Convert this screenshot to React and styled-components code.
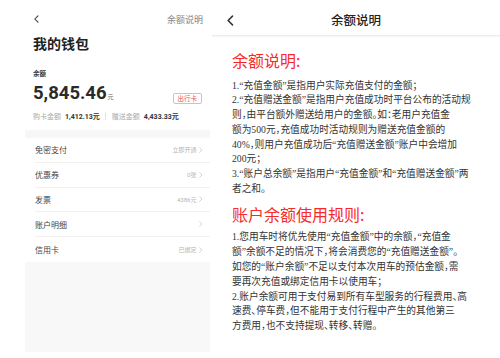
import React from "react";
import styled, { createGlobalStyle } from "styled-components";

const GlobalStyle = createGlobalStyle`
  html, body {
    margin: 0;
    padding: 0;
    background: #ffffff;
  }
  body {
    font-family: "Roboto", "Noto Sans CJK SC", sans-serif;
  }
`;

const menuItems = [
  { label: "免密支付", value: "立即开通" },
  { label: "优惠券", value: "0张" },
  { label: "发票", value: "4386元" },
  { label: "账户明细", value: "" },
  { label: "信用卡", value: "已绑定" },
];

const rulesA = [
  "1.“充值金额”是指用户实际充值支付的金额；",
  "2.“充值赠送金额”是指用户充值成功时平台公布的活动规",
  "则，由平台额外赠送给用户的金额。如：老用户充值金",
  "额为500元，充值成功时活动规则为赠送充值金额的",
  "40%，则用户充值成功后“充值赠送金额”账户中会增加",
  "200元；",
  "3.“账户总余额”是指用户“充值金额”和“充值赠送金额”两",
  "者之和。",
];

const rulesB = [
  "1.您用车时将优先使用“充值金额”中的余额，“充值金",
  "额”余额不足的情况下，将会消费您的“充值赠送金额”。",
  "如您的“账户余额”不足以支付本次用车的预估金额，需",
  "要再次充值或绑定信用卡以使用车；",
  "2.账户余额可用于支付易到所有车型服务的行程费用、高",
  "速费、停车费，但不能用于支付行程中产生的其他第三",
  "方费用，也不支持提现、转移、转赠。",
];

const Chevron = ({ size = 9, color = "#333", left = true, weight = 1.3 }) => (
  <svg width={size * 0.6} height={size} viewBox="0 0 6 10" fill="none">
    <polyline
      points={left ? "5,1 1,5 5,9" : "1,1 5,5 1,9"}
      stroke={color}
      strokeWidth={weight}
      strokeLinecap="round"
      strokeLinejoin="round"
    />
  </svg>
);

export default function App() {
  return (
    <>
      <GlobalStyle />
      <Page>
        <Wallet>
          <WalletNav>
            <Chevron size={8} color="#333" />
            <NavLink>余额说明</NavLink>
          </WalletNav>
          <WalletTitle>我的钱包</WalletTitle>
          <BalanceLabel>余额</BalanceLabel>
          <AmountRow>
            <Amount>
              5,845.46<Unit>元</Unit>
            </Amount>
            <Badge>出行卡</Badge>
          </AmountRow>
          <SubLine>
            <SubKey>购卡金额</SubKey>
            <SubValue>1,412.13元</SubValue>
            <SubDivider />
            <SubKey>赠送金额</SubKey>
            <SubValue>4,433.33元</SubValue>
          </SubLine>
          <Band />
          <Menu>
            {menuItems.map((item, i) => (
              <MenuRow key={item.label} last={i === menuItems.length - 1}>
                <MenuLabel>{item.label}</MenuLabel>
                <MenuValue>
                  {item.value}
                  <Chevron size={6} color="#bbb" left={false} weight={1} />
                </MenuValue>
              </MenuRow>
            ))}
          </Menu>
          <Filler />
        </Wallet>

        <Explain>
          <ExplainHeader>
            <BackButton>
              <Chevron size={11} color="#333" weight={1.4} />
            </BackButton>
            <HeaderTitle>余额说明</HeaderTitle>
          </ExplainHeader>
          <ExplainBody>
            <Heading>余额说明:</Heading>
            <Para>
              {rulesA.map((line) => (
                <Line key={line}>{line}</Line>
              ))}
            </Para>
            <Heading second>账户余额使用规则:</Heading>
            <Para second>
              {rulesB.map((line) => (
                <Line key={line}>{line}</Line>
              ))}
            </Para>
          </ExplainBody>
        </Explain>
      </Page>
    </>
  );
}

const Page = styled.div`
  display: flex;
  width: 500px;
  height: 358px;
  padding-left: 25px;
  box-sizing: border-box;
  gap: 2px;
  background: #ffffff;
  overflow: hidden;
`;

const Wallet = styled.div`
  width: 185px;
  display: flex;
  flex-direction: column;
  color: #222;
`;

const WalletNav = styled.div`
  height: 36px;
  display: flex;
  align-items: center;
  justify-content: space-between;
  padding: 2px 7px 0 9px;
  box-sizing: border-box;
`;

const NavLink = styled.span`
  font-size: 9px;
  color: #888;
`;

const WalletTitle = styled.div`
  font-size: 14px;
  line-height: 16px;
  font-weight: 700;
  padding-left: 8px;
  color: #222;
`;

const BalanceLabel = styled.div`
  margin-top: 18px;
  padding-left: 8px;
  font-size: 6.5px;
  line-height: 8px;
  font-weight: 700;
  color: #333;
`;

const AmountRow = styled.div`
  margin-top: 9px;
  padding: 0 8px;
  display: flex;
  align-items: flex-end;
  justify-content: space-between;
  height: 20px;
`;

const Amount = styled.div`
  font-family: "Roboto", "Liberation Sans", sans-serif;
  font-size: 18.5px;
  line-height: 20px;
  font-weight: 700;
  color: #2a2a2a;
`;

const Unit = styled.span`
  font-family: "Noto Sans CJK SC", sans-serif;
  font-size: 6px;
  font-weight: 400;
  color: #666;
  margin-left: 1px;
`;

const Badge = styled.span`
  height: 11px;
  line-height: 10px;
  padding: 0 4px;
  margin-bottom: 3px;
  font-size: 6.5px;
  color: #ec4b57;
  border: 1px solid #f4b0b6;
  border-radius: 2px;
  box-sizing: border-box;
`;

const SubLine = styled.div`
  margin-top: 4px;
  padding-left: 8px;
  display: flex;
  align-items: center;
  height: 10px;
  font-size: 7px;
`;

const SubKey = styled.span`
  color: #aaa;
  margin-right: 4px;
`;

const SubValue = styled.span`
  color: #333;
  font-weight: 700;
`;

const SubDivider = styled.span`
  width: 1px;
  height: 7px;
  background: #e2e2e2;
  margin: 0 6px 0 5px;
`;

const Band = styled.div`
  margin-top: 9px;
  height: 8px;
  background: #f7f7f7;
`;

const Menu = styled.div`
  display: flex;
  flex-direction: column;
`;

const MenuRow = styled.div`
  height: 24.8px;
  margin-left: 10px;
  padding-right: 7px;
  display: flex;
  align-items: center;
  justify-content: space-between;
  box-sizing: border-box;
  border-bottom: ${(p) => (p.last ? "none" : "1px solid #f0f0f0")};
`;

const MenuLabel = styled.span`
  font-size: 8px;
  color: #444;
`;

const MenuValue = styled.span`
  display: flex;
  align-items: center;
  gap: 3px;
  font-size: 6px;
  color: #b5b5b5;
`;

const Filler = styled.div`
  height: 90px;
  background: #f8f8f8;
`;

const Explain = styled.div`
  flex: 1;
  display: flex;
  flex-direction: column;
`;

const ExplainHeader = styled.div`
  height: 35px;
  position: relative;
  display: flex;
  align-items: center;
  justify-content: center;
  border-bottom: 1px solid #ececec;
  box-shadow: 0 1px 1px rgba(0, 0, 0, 0.03);
`;

const BackButton = styled.span`
  position: absolute;
  left: 15px;
  top: 15px;
  display: flex;
`;

const HeaderTitle = styled.span`
  font-family: "Noto Sans CJK SC", sans-serif;
  font-size: 12.5px;
  font-weight: 500;
  color: #222;
  margin-top: 4px;
`;

const ExplainBody = styled.div`
  padding: 0 0 0 20px;
`;

const Heading = styled.div`
  margin-top: ${(p) => (p.second ? "7px" : "14px")};
  font-family: "Noto Sans CJK SC", sans-serif;
  font-size: 16px;
  line-height: 20px;
  color: #f52b2b;
`;

const Para = styled.div`
  margin-top: ${(p) => (p.second ? "6.5px" : "8.5px")};
  font-family: "Liberation Serif", "Noto Sans CJK SC", serif;
  font-size: 9.7px;
  line-height: 14.8px;
  color: #333;
  font-feature-settings: "halt";
`;

const Line = styled.span`
  display: block;
  white-space: nowrap;
`;
